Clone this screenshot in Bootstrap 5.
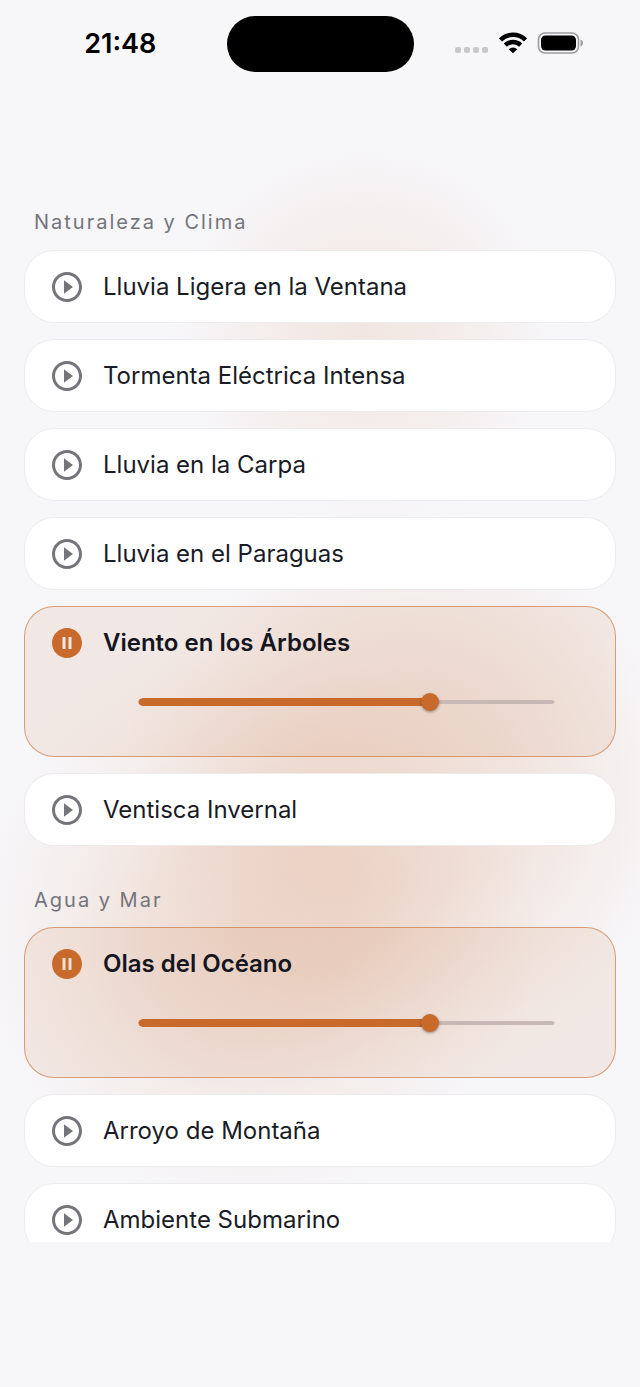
<!DOCTYPE html>
<html lang="es">
<head>
<meta charset="utf-8">
<meta name="viewport" content="width=device-width, initial-scale=1">
<title>Sonidos</title>
<link href="https://cdn.jsdelivr.net/npm/bootstrap@5.3.0/dist/css/bootstrap.min.css" rel="stylesheet">
<style>
  :root { --accent: #c96a2d; --muted: #74747b; --ink: #191b26; --base: #f7f7fa; }
  body { font-family: Inter, Roboto, "Liberation Sans", sans-serif; color: var(--ink); background: var(--base); }
  .screen {
    background:
      radial-gradient(circle at 57% 24%, rgba(201,106,45,.12), rgba(201,106,45,.09) 65px, rgba(201,106,45,.03) 150px, transparent 200px),
      radial-gradient(circle at 64% 57%, rgba(201,106,45,.17), rgba(201,106,45,.14) 100px, rgba(201,106,45,.08) 180px, rgba(201,106,45,.02) 250px, transparent 290px),
      radial-gradient(circle at 39% 67%, rgba(201,106,45,.19), rgba(201,106,45,.15) 100px, rgba(201,106,45,.08) 170px, rgba(201,106,45,.03) 230px, transparent 290px),
      var(--base);
  }
  .status-bar { height: 88px; padding-top: 16px; color: #000; }
  .clock { font-size: 27px; line-height: 56px; font-weight: 600; padding-left: 14px; }
  .island { width: 187px; height: 56px; background: #000; }
  .status-icons { height: 54px; gap: 10px; padding-right: 14px; }
  .sound-list { padding: 112px 24px 0; min-height: 0; }
  .bottom-space { height: 145px; }
  .group-title { font-size: 20px; line-height: 28px; font-weight: 400; color: var(--muted); letter-spacing: 2px; margin: 8px 0 14px 10px; }
  .group-title.later { margin-top: 40px; margin-bottom: 13px; }
  .stack { gap: 16px; }
  .sound { border: 1px solid #ececee; border-radius: 30px; background: #fff; }
  .sound.playing { border: 1px solid rgba(201,106,45,.6); background: rgba(201,106,45,.1); padding-bottom: 36px; }
  .sound-btn { border: 0; background: none; color: inherit; font-size: 24px; line-height: 32px; height: 71px; gap: 21px; padding: 0 27px; }
  .sound-btn svg { width: 30px; height: 30px; color: var(--muted); flex: none; }
  .playing .sound-btn { font-weight: 600; color: #14151f; }
  .playing .sound-btn svg { color: var(--accent); }
  .level-row { padding: 6px 51px 0 105px; }
  .level { -webkit-appearance: none; appearance: none; display: block; width: 100%; height: 36px; margin: 0; background: transparent; }
  .level::-webkit-slider-runnable-track {
    height: 36px;
    background:
      radial-gradient(circle at 12px 50%, var(--accent) 3px, transparent 4px),
      linear-gradient(var(--accent), var(--accent)) 12px 50% / calc((100% - 18px) * .7) 8px no-repeat,
      radial-gradient(circle at calc(100% - 11px) 50%, #c8b8b5 1px, transparent 2px),
      linear-gradient(#c8b8b5, #c8b8b5) calc(100% - 11px) 50% / 28% 4px no-repeat;
  }
  .level::-webkit-slider-thumb {
    -webkit-appearance: none; width: 18px; height: 18px; margin-top: 9px;
    border-radius: 50%; background: var(--accent); box-shadow: 0 1px 3px rgba(0,0,0,.4);
  }
</style>
</head>
<body>
<svg class="d-none" aria-hidden="true">
  <symbol id="play" viewBox="2 2 20 20"><path fill="currentColor" d="M10 16.5l6-4.5-6-4.5v9zM12 2C6.480 2 2 6.480 2 12s4.480 10 10 10 10-4.480 10-10S17.520 2 12 2zm0 18c-4.410 0-8-3.590-8-8s3.590-8 8-8 8 3.590 8 8-3.590 8-8 8z"/></symbol>
  <symbol id="pause" viewBox="2 2 20 20"><path fill="currentColor" d="M12 2C6.480 2 2 6.480 2 12s4.480 10 10 10 10-4.480 10-10S17.520 2 12 2zm-1 14H9V8h2v8zm4 0h-2V8h2v8z"/></symbol>
</svg>
<div class="screen vh-100 d-flex flex-column overflow-hidden">
  <header class="status-bar row g-0 flex-shrink-0">
    <div class="col text-center clock">21:48</div>
    <div class="col-auto"><div class="island rounded-pill"></div></div>
    <div class="col d-flex justify-content-center align-items-center status-icons">
      <svg width="34" height="28" viewBox="0 0 34 28" fill="#c8c8ca" aria-hidden="true"><rect x="0" y="18" width="6" height="6" rx="2"/><rect x="9" y="18" width="6" height="6" rx="2"/><rect x="18" y="18" width="6" height="6" rx="2"/><rect x="27" y="18" width="6" height="6" rx="2"/></svg>
      <svg width="28" height="22" viewBox="0 0 28 22" aria-hidden="true"><g fill="none" stroke="#000" stroke-width="4.400"><path d="M1.500 7.900a17.800 17.800 0 0 1 25 0"/><path d="M6.300 13.100a11 11 0 0 1 15.400 0"/></g><path d="M14 21.300l-4.200-4.100a6 6 0 0 1 8.400 0z"/></svg>
      <svg width="47" height="22" viewBox="0 0 47 22" aria-hidden="true"><rect x="1.500" y="1" width="40" height="20" rx="6.500" fill="none" stroke="#9c9c9e" stroke-width="1.600"/><rect x="4" y="3.500" width="35" height="15" rx="4.500"/><path d="M43.500 7.500c3.200.8 3.200 6.200 0 7z" fill="#9c9c9e"/></svg>
    </div>
  </header>

  <main class="sound-list flex-grow-1 overflow-hidden">
    <h2 class="group-title">Naturaleza y Clima</h2>
    <div class="d-flex flex-column stack">
      <div class="sound"><button type="button" class="sound-btn d-flex align-items-center w-100 text-start"><svg aria-hidden="true"><use href="#play"/></svg>Lluvia Ligera en la Ventana</button></div>
      <div class="sound"><button type="button" class="sound-btn d-flex align-items-center w-100 text-start"><svg aria-hidden="true"><use href="#play"/></svg>Tormenta Eléctrica Intensa</button></div>
      <div class="sound"><button type="button" class="sound-btn d-flex align-items-center w-100 text-start"><svg aria-hidden="true"><use href="#play"/></svg>Lluvia en la Carpa</button></div>
      <div class="sound"><button type="button" class="sound-btn d-flex align-items-center w-100 text-start"><svg aria-hidden="true"><use href="#play"/></svg>Lluvia en el Paraguas</button></div>
      <div class="sound playing">
        <button type="button" id="viento" class="sound-btn d-flex align-items-center w-100 text-start"><svg aria-hidden="true"><use href="#pause"/></svg>Viento en los Árboles</button>
        <div class="level-row"><input type="range" class="level" min="0" max="100" value="70" aria-labelledby="viento"></div>
      </div>
      <div class="sound"><button type="button" class="sound-btn d-flex align-items-center w-100 text-start"><svg aria-hidden="true"><use href="#play"/></svg>Ventisca Invernal</button></div>
    </div>

    <h2 class="group-title later">Agua y Mar</h2>
    <div class="d-flex flex-column stack">
      <div class="sound playing">
        <button type="button" id="olas" class="sound-btn d-flex align-items-center w-100 text-start"><svg aria-hidden="true"><use href="#pause"/></svg>Olas del Océano</button>
        <div class="level-row"><input type="range" class="level" min="0" max="100" value="70" aria-labelledby="olas"></div>
      </div>
      <div class="sound"><button type="button" class="sound-btn d-flex align-items-center w-100 text-start"><svg aria-hidden="true"><use href="#play"/></svg>Arroyo de Montaña</button></div>
      <div class="sound"><button type="button" class="sound-btn d-flex align-items-center w-100 text-start"><svg aria-hidden="true"><use href="#play"/></svg>Ambiente Submarino</button></div>
    </div>
  </main>
  <div class="bottom-space flex-shrink-0"></div>
</div>
<script src="https://cdn.jsdelivr.net/npm/bootstrap@5.3.0/dist/js/bootstrap.bundle.min.js"></script>
</body>
</html>
